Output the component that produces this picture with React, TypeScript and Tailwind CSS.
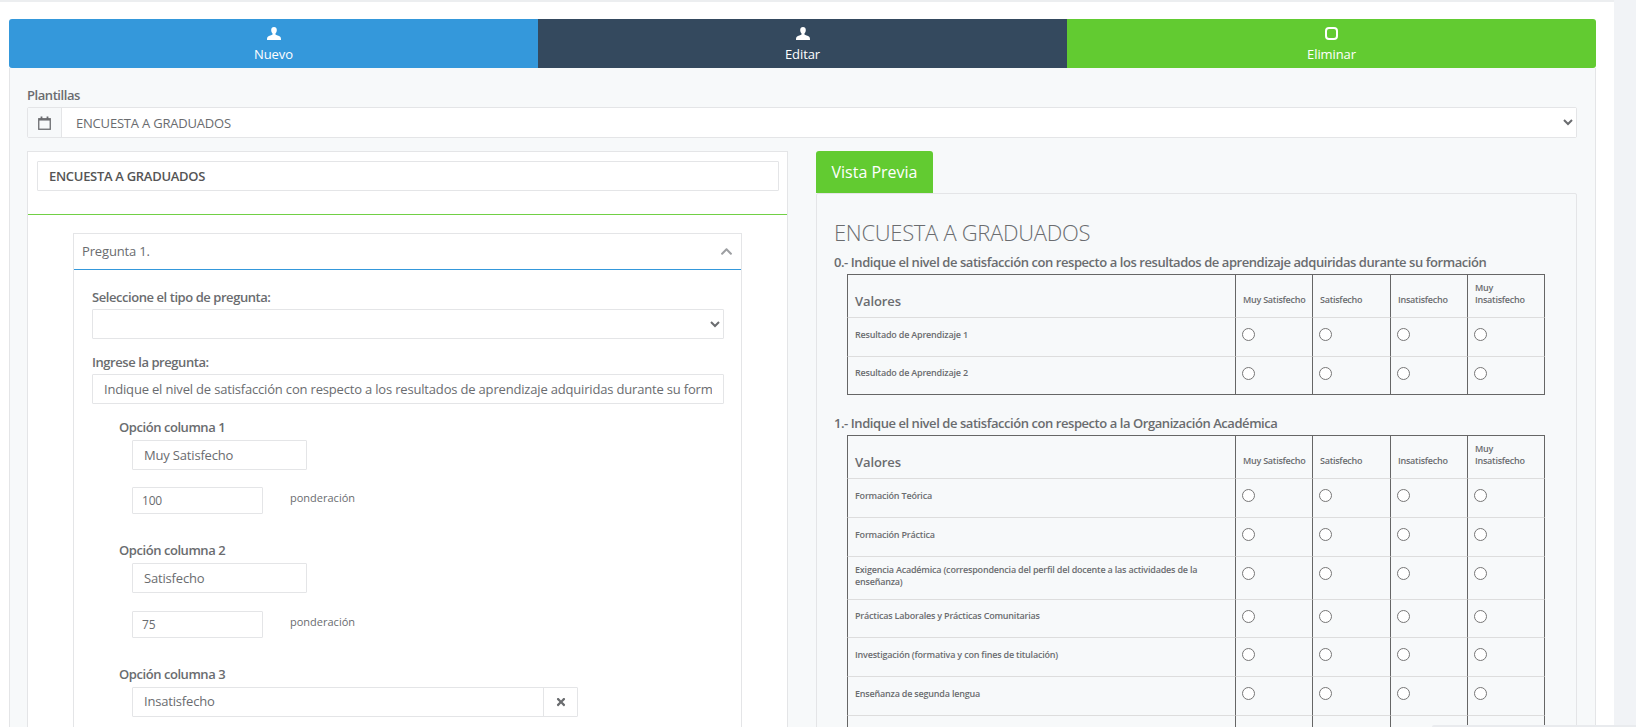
import { FaChevronUp, FaTimes } from "react-icons/fa";

const UserIcon = () => (
  <svg width="14" height="13" viewBox="0 0 14 13" fill="currentColor">
    <path d="M7 0C5.200 0 4.200 1.300 4.200 3.100c0 1.300.5 2.600 1.300 3.400.2.3.2.8 0 1.100C4.800 8.300 2 8.700.8 9.800.2 10.400 0 11.400 0 13h14c0-1.600-.2-2.600-.8-3.200C12 8.700 9.200 8.300 8.500 7.600c-.2-.3-.2-.8 0-1.100C9.300 5.700 9.800 4.400 9.800 3.100 9.800 1.300 8.800 0 7 0z" />
  </svg>
);

const CalendarIcon = () => (
  <svg width="13" height="14" viewBox="0 0 13 14" fill="none" stroke="#6a6c6f">
    <rect x="0.750" y="2.750" width="11.500" height="10.500" strokeWidth="1.300" />
    <path d="M1 3.800h11" strokeWidth="1.500" />
    <path d="M3.500 0.500v3M9.500 0.500v3" strokeWidth="1.800" />
  </svg>
);

const inputCls =
  "block bg-white border border-[#e4e5e7] rounded-[1px] text-[13px] tracking-[-0.18px] text-[#6a6c6f] outline-none";

const labelCls = "block text-[13px] leading-[18px] font-semibold tracking-[-0.44px] text-[#6a6c6f]";

type OptionProps = { n: number; value: string; weight?: string; removable?: boolean; weightGap?: string };

const OptionColumn = ({ n, value, weight, removable, weightGap = "mt-[17px]" }: OptionProps) => (
  <div>
    <label className={`${labelCls} ml-[27px]`}>Opción columna {n}</label>
    {removable ? (
      <div className="flex ml-[40px] mt-[4px] w-[446px] h-[30px] border border-[#e4e5e7] bg-white rounded-[1px]">
        <input
          readOnly
          defaultValue={value}
          className="flex-1 min-w-0 pl-[11px] text-[13px] tracking-[-0.18px] text-[#6a6c6f] outline-none"
        />
        <span className="w-[34px] border-l border-[#e4e5e7] flex items-center justify-center text-[#6a6c6f]">
          <FaTimes size={12} />
        </span>
      </div>
    ) : (
      <input
        readOnly
        defaultValue={value}
        className={`${inputCls} ml-[40px] mt-[4px] w-[175px] h-[30px] pl-[11px]`}
      />
    )}
    {weight && (
      <div className={`flex items-start ml-[40px] ${weightGap}`}>
        <input
          readOnly
          defaultValue={weight}
          className={`${inputCls} w-[131px] h-[27px] pl-[9px] !text-[12px]`}
        />
        <span className="ml-[27px] mt-[2px] text-[11px] leading-[18px] text-[#6a6c6f]">ponderación</span>
      </div>
    )}
  </div>
);

const radios = [0, 1, 2, 3];

type SurveyRow = { label: string; h: string };

const SurveyTable = ({ rows }: { rows: SurveyRow[] }) => (
  <table className="table-fixed border-separate border-spacing-0 ml-[13px] mt-[3px] w-[698px] text-[#6a6c6f]">
    <colgroup>
      <col className="w-[388px]" />
      <col className="w-[77px]" />
      <col className="w-[78px]" />
      <col className="w-[77px]" />
      <col className="w-[78px]" />
    </colgroup>
    <thead>
      <tr className="h-[44px] font-semibold">
        <th className="border border-r-0 border-[#666] border-b-[#ddd] pl-[7px] pt-[12px] text-left text-[13px] font-semibold tracking-[-0.1px]">
          Valores
        </th>
        {["Muy Satisfecho", "Satisfecho", "Insatisfecho", "Muy Insatisfecho"].map((h, i) => (
          <th
            key={h}
            className={`border-t border-l border-b border-t-[#666] border-l-[#666] border-b-[#ddd] ${i === 3 ? "border-r border-r-[#666]" : ""} pl-[7px] pr-[4px] pb-[11px] align-bottom text-left text-[9px] leading-[12px] font-semibold tracking-[-0.25px]`}
          >
            {h}
          </th>
        ))}
      </tr>
    </thead>
    <tbody>
      {rows.map((r, idx) => {
        const last = idx === rows.length - 1;
        const bottom = last ? "border-b-[#666]" : "border-b-[#ddd]";
        return (
          <tr key={idx} className={r.h}>
            <td
              className={`border-l border-b border-l-[#666] ${bottom} pl-[7px] pr-[6px] pb-[5px] align-middle text-[9px] leading-[12px] font-semibold tracking-[-0.2px]`}
            >
              {r.label}
            </td>
            {radios.map((c) => (
              <td
                key={c}
                className={`border-l border-b border-l-[#666] ${bottom} ${c === 3 ? "border-r border-r-[#666]" : ""} pl-[6px] pt-[10px] align-top`}
              >
                {/* the row cut off by the fold has nothing visible yet */}
                {r.label && <input type="radio" readOnly checked={false} className="block m-0 w-[13px] h-[13px]" />}
              </td>
            ))}
          </tr>
        );
      })}
    </tbody>
  </table>
);

const App = () => {
  return (
    <div className="relative h-[727px] overflow-hidden flex bg-white font-['Open_Sans',sans-serif] text-[13px] text-[#6a6c6f]">
      <div className="flex-1 min-w-0 border-t-2 border-[#eceef0] pt-[17px] pl-[9px] pr-[18px]">
        {/* tabs */}
        <div className="flex h-[49px] text-white text-[13px]">
          <div className="flex-1 bg-[#3498db] rounded-tl-[3px] rounded-bl-[3px] flex flex-col items-center pt-[8px]">
            <UserIcon />
            <span className="mt-[5px] leading-[18px] tracking-[-0.1px]">Nuevo</span>
          </div>
          <div className="flex-1 bg-[#34495e] flex flex-col items-center pt-[8px]">
            <UserIcon />
            <span className="mt-[5px] leading-[18px] tracking-[-0.1px]">Editar</span>
          </div>
          <div className="flex-1 bg-[#62cb31] rounded-tr-[3px] rounded-br-[3px] flex flex-col items-center pt-[8px]">
            <span className="block w-[13px] h-[13px] border-[2.5px] border-white rounded-[4px]" />
            <span className="mt-[5px] leading-[18px] tracking-[-0.1px]">Eliminar</span>
          </div>
        </div>

        <div className="h-full bg-[#f7f9fa] border-x border-[#e4e5e7] pt-[18px] pl-[17px] pr-[18px]">
          <label className={labelCls}>Plantillas</label>
          <div className="flex mt-[3px] h-[31px] bg-white border border-[#e4e5e7] rounded-[2px]">
            <span className="w-[34px] bg-[#f7f9fa] border-r border-[#e4e5e7] flex items-center justify-center">
              <CalendarIcon />
            </span>
            <select className="flex-1 min-w-0 pl-[10px] text-[13px] tracking-[-0.2px] text-[#6a6c6f] outline-none bg-white">
              <option>ENCUESTA A GRADUADOS</option>
            </select>
          </div>

          <div className="flex gap-[28px] mt-[13px] items-start">
            {/* editor */}
            <div className="w-[761px] shrink-0 bg-white border border-[#e4e5e7] h-[600px]">
              <div className="pl-[9px] pr-[8px] pt-[9px]">
                <input
                  readOnly
                  defaultValue="ENCUESTA A GRADUADOS"
                  className={`${inputCls} w-full h-[30px] pl-[11px] !font-semibold !tracking-[-0.3px] !text-[#555]`}
                />
              </div>
              <div className="mt-[23px] border-t border-[#62cb31] opacity-90" />
              <div className="ml-[45px] mt-[18px] w-[669px] border border-[#e4e5e7] bg-white h-[600px]">
                <div className="h-[36px] border-b border-[#3498db] flex items-center justify-between pl-[8px] pr-[8px]">
                  <span className="tracking-[-0.15px]">Pregunta 1.</span>
                  <FaChevronUp size={13} className="text-[#9d9fa2]" />
                </div>
                <div className="pl-[18px] pr-[17px] pt-[18px]">
                  <label className={labelCls}>Seleccione el tipo de pregunta:</label>
                  <select className={`${inputCls} mt-[3px] w-full h-[30px] pl-[10px]`}>
                    <option></option>
                  </select>
                  <label className={`${labelCls} mt-[14px]`}>Ingrese la pregunta:</label>
                  <input
                    readOnly
                    defaultValue="Indique el nivel de satisfacción con respecto a los resultados de aprendizaje adquiridas durante su formación"
                    className={`${inputCls} mt-[3px] w-full h-[30px] px-[11px]`}
                  />
                  <div className="mt-[14px] flex flex-col gap-[27px]">
                    <OptionColumn n={1} value="Muy Satisfecho" weight="100" />
                    <OptionColumn n={2} value="Satisfecho" weight="75" weightGap="mt-[18px]" />
                    <OptionColumn n={3} value="Insatisfecho" removable />
                  </div>
                </div>
              </div>
            </div>

            {/* preview */}
            <div className="flex-1 min-w-0">
              <div className="w-[117px] h-[42px] bg-[#62cb31] text-white text-[16px] rounded-t-[3px] flex items-center justify-center">
                Vista Previa
              </div>
              <div className="bg-[#f7f9fa] border border-[#e4e5e7] rounded-[2px] px-[17px] pt-[23px] h-[600px]">
                <h3 className="text-[22px] leading-[30px] font-light tracking-[-0.3px] text-[#6a6c6f]">
                  ENCUESTA A GRADUADOS
                </h3>
                <label className={`${labelCls} mt-[6px]`}>
                  0.- Indique el nivel de satisfacción con respecto a los resultados de aprendizaje adquiridas durante su formación
                </label>
                <SurveyTable
                  rows={[
                    { label: "Resultado de Aprendizaje 1", h: "h-[39px]" },
                    { label: "Resultado de Aprendizaje 2", h: "h-[38px]" },
                  ]}
                />
                <label className={`${labelCls} mt-[19px]`}>
                  1.- Indique el nivel de satisfacción con respecto a la Organización Académica
                </label>
                <SurveyTable
                  rows={[
                    { label: "Formación Teórica", h: "h-[39px]" },
                    { label: "Formación Práctica", h: "h-[39px]" },
                    {
                      label:
                        "Exigencia Académica (correspondencia del perfil del docente a las actividades de la enseñanza)",
                      h: "h-[43px]",
                    },
                    { label: "Prácticas Laborales y Prácticas Comunitarias", h: "h-[38px]" },
                    { label: "Investigación (formativa y con fines de titulación)", h: "h-[39px]" },
                    { label: "Enseñanza de segunda lengua", h: "h-[39px]" },
                    { label: "", h: "h-[39px]" },
                  ]}
                />
              </div>
            </div>
          </div>
        </div>
      </div>
      <div className="w-[22px] shrink-0 bg-[#f1f3f6]" />
      <div className="absolute bottom-0 right-0 w-[204px] h-[2px] bg-[#e9ebee] rounded-tl-[2px]" />
    </div>
  );
};

export default App;
